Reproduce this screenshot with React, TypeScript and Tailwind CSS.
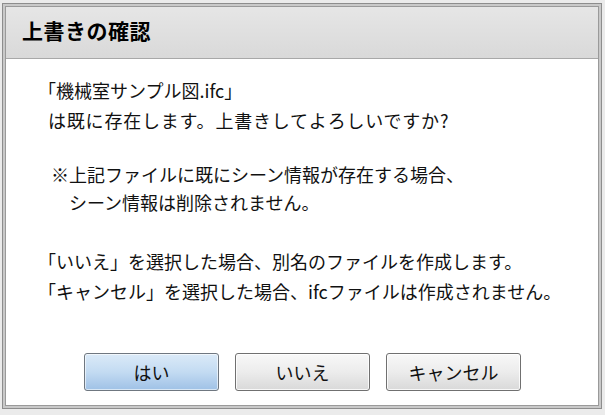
const font = { fontFamily: '"Noto Sans CJK JP", "Noto Sans", sans-serif' };

const DialogButton = ({ label, primary }: { label: string; primary?: boolean }) => {
    return (
        <button
            className={
                primary
                    ? 'w-[135px] h-[38px] rounded-[3px] border border-[#6f7780] bg-gradient-to-b from-[#dbeaf8] via-[#c3dbf2] to-[#9fc1e6] text-[18px] text-[#111] shadow-[inset_0_0_0_1px_rgba(255,255,255,0.6)]'
                    : 'w-[135px] h-[38px] rounded-[3px] border border-[#707070] bg-gradient-to-b from-[#f8f8f8] via-[#ececec] to-[#d9d9d9] text-[18px] text-[#111] shadow-[inset_0_0_0_1px_rgba(255,255,255,0.8)]'
            }
        >
            {label}
        </button>
    );
};

const App = () => {
    return (
        <div className="w-[605px] h-[415px] bg-[#ebebeb] pt-[3px] pl-[2px] overflow-hidden" style={font}>
            <div className="w-[600px] h-[406px] border border-[#8d8d8d] bg-[#c9c9c9] p-[2px]">
                <div className="w-full h-full border border-[#9a9a9a] bg-white flex flex-col">
                    <div className="h-[52px] shrink-0 bg-gradient-to-b from-[#e6e6e6] to-[#d9d9d9] border-b border-[#a8a8a8] flex items-center pl-[16px] pb-[3px]">
                        <h1 className="text-[21px] font-bold text-black tracking-[0.5px]">上書きの確認</h1>
                    </div>
                    <div className="flex-1 flex flex-col pl-[32px] pt-[16px] text-[18px] leading-[30px] text-[#111]">
                        <div>
                            <p>「機械室サンプル図.ifc」</p>
                            <p className="pl-[10px] tracking-[0.8px]">は既に存在します。上書きしてよろしいですか?</p>
                        </div>
                        <div className="mt-[25px] pl-[13px] leading-[28px]">
                            <p>※上記ファイルに既にシーン情報が存在する場合、</p>
                            <p className="pl-[18px]">シーン情報は削除されません。</p>
                        </div>
                        <div className="mt-[30px]">
                            <p>「いいえ」を選択した場合、別名のファイルを作成します。</p>
                            <p>「キャンセル」を選択した場合、ifcファイルは作成されません。</p>
                        </div>
                    </div>
                    <div className="flex gap-[16px] pl-[78px] pb-[14px]">
                        <DialogButton label="はい" primary />
                        <DialogButton label="いいえ" />
                        <DialogButton label="キャンセル" />
                    </div>
                </div>
            </div>
        </div>
    );
};

export default App;
